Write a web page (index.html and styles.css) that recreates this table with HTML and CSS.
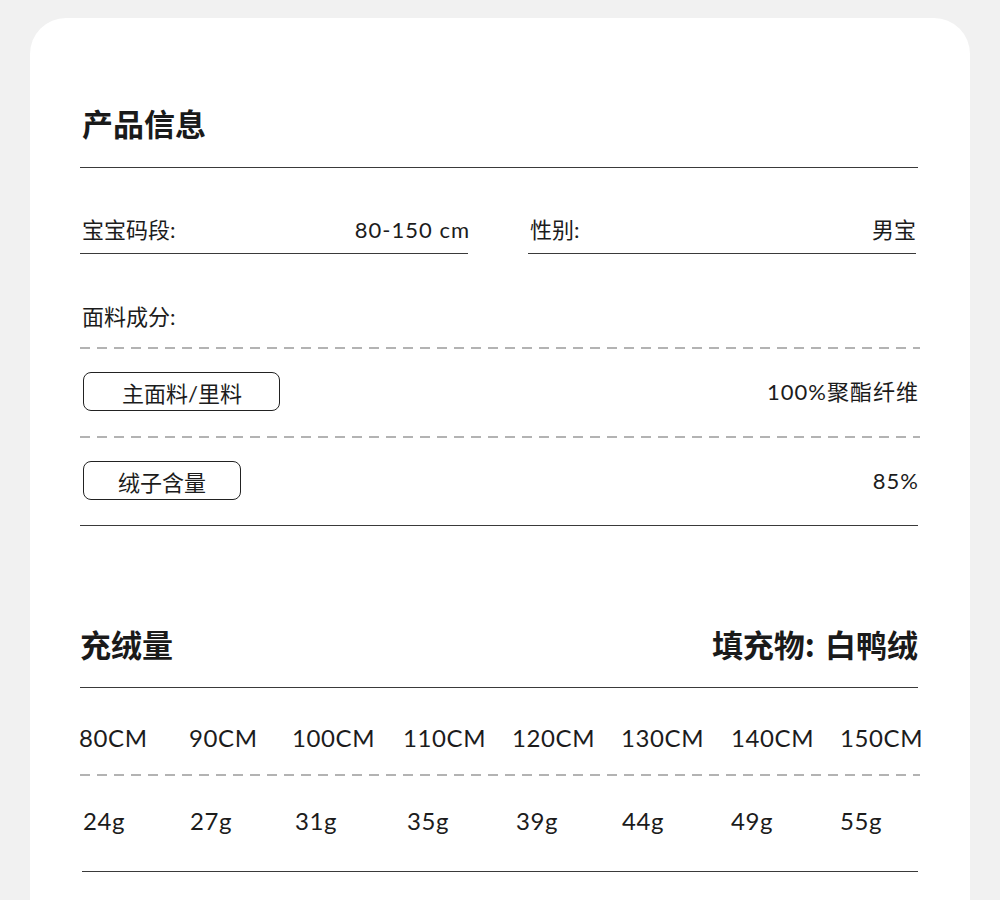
FILE: index.html
```html
<!DOCTYPE html>
<html lang="zh-CN">
<head>
<meta charset="utf-8">
<title>产品信息</title>
<link rel="stylesheet" href="styles.css">
</head>
<body>
<div class="card">
  <div class="sec-head">
    <h2 class="sec-title">产品信息</h2>
  </div>

  <div class="info-row">
    <div class="info-cell"><span>宝宝码段:</span><span class="num">80-150 cm</span></div>
    <div class="info-cell"><span>性别:</span><span>男宝</span></div>
  </div>

  <div class="label">面料成分:</div>
  <div class="dash dash-first"></div>
  <div class="fabric-row">
    <span class="pill pill-wide">主面料/里料</span>
    <span class="val num">100%聚酯纤维</span>
  </div>
  <div class="dash"></div>
  <div class="fabric-row">
    <span class="pill">绒子含量</span>
    <span class="val num">85%</span>
  </div>
  <div class="solid"></div>

  <div class="sec-head sec-head-2">
    <h2 class="sec-title">充绒量</h2>
    <h2 class="sec-title">填充物: 白鸭绒</h2>
  </div>

  <div class="grid sizes">
    <span>80CM</span><span>90CM</span><span>100CM</span><span>110CM</span><span>120CM</span><span>130CM</span><span>140CM</span><span>150CM</span>
  </div>
  <div class="dash dash-grid"></div>
  <div class="grid weights">
    <span>24g</span><span>27g</span><span>31g</span><span>35g</span><span>39g</span><span>44g</span><span>49g</span><span>55g</span>
  </div>
  <div class="solid solid-bottom"></div>
</div>
</body>
</html>
```

FILE: styles.css
```css
html, body {
  margin: 0;
  padding: 0;
}
body {
  background: #f1f1f1;
  width: 1000px;
  height: 900px;
  overflow: hidden;
  font-family: "Lato", "Noto Sans CJK SC", sans-serif;
  color: #1c1c1c;
}
.card {
  margin: 18px 30px 0;
  padding: 0 52px 0 50px;
  background: #fff;
  border-radius: 36px 36px 0 0;
  min-height: 1000px;
  box-sizing: border-box;
}
.sec-head {
  display: flex;
  justify-content: space-between;
  align-items: center;
  padding: 85px 0 24px;
  border-bottom: 1px solid #3a3a3a;
}
.sec-title {
  margin: 0;
  font-family: "Noto Sans CJK SC", sans-serif;
  font-size: 31px;
  font-weight: 700;
  line-height: 40px;
  color: #1a1a1a;
  padding-left: 2px;
}
.sec-head-2 {
  padding: 98px 0 23px;
}
.sec-head-2 .sec-title {
  padding-left: 0;
  word-spacing: 3px;
}
.info-row {
  display: flex;
  gap: 60px;
  margin-top: 47px;
}
.info-cell {
  flex: 0 0 388px;
  box-sizing: border-box;
  display: flex;
  justify-content: space-between;
  font-size: 22px;
  line-height: 30px;
  padding: 0 0 8px 2px;
  border-bottom: 1px solid #3a3a3a;
}
.info-cell .num {
  margin-right: -2px;
}
.num {
  letter-spacing: 1px;
}
.label {
  margin-top: 48px;
  font-size: 22px;
  line-height: 30px;
  padding-left: 2px;
}
.dash {
  height: 2px;
  margin-right: -2px;
  background: repeating-linear-gradient(90deg, #b3b3b3 0 10px, transparent 10px 17px);
}
.dash-first {
  margin-top: 15px;
}
.fabric-row {
  display: flex;
  justify-content: space-between;
  align-items: center;
  padding: 23px 0 25px 3px;
}
.pill {
  display: inline-flex;
  align-items: center;
  height: 39px;
  box-sizing: border-box;
  padding: 0 34px;
  border: 1px solid #222;
  border-radius: 8px;
  font-size: 22px;
}
.pill-wide {
  padding: 0 37px 0 38px;
}
.val {
  font-size: 22px;
  line-height: 30px;
  margin-right: -1px;
}
.solid {
  border-top: 1px solid #3a3a3a;
}
.grid {
  display: grid;
  font-size: 24px;
  line-height: 30px;
  letter-spacing: 0.6px;
}
.sizes {
  margin-top: 35px;
  margin-left: -1px;
  grid-template-columns: 110px 103px 111px 109px 109px 110px 109px auto;
}
.dash-grid {
  margin-top: 21px;
}
.weights {
  margin-top: 30px;
  padding-left: 3px;
  grid-template-columns: 107px 105px 112px 109px 106px 109px 109px auto;
}
.solid-bottom {
  margin-top: 35px;
  margin-left: 2px;
}
```
